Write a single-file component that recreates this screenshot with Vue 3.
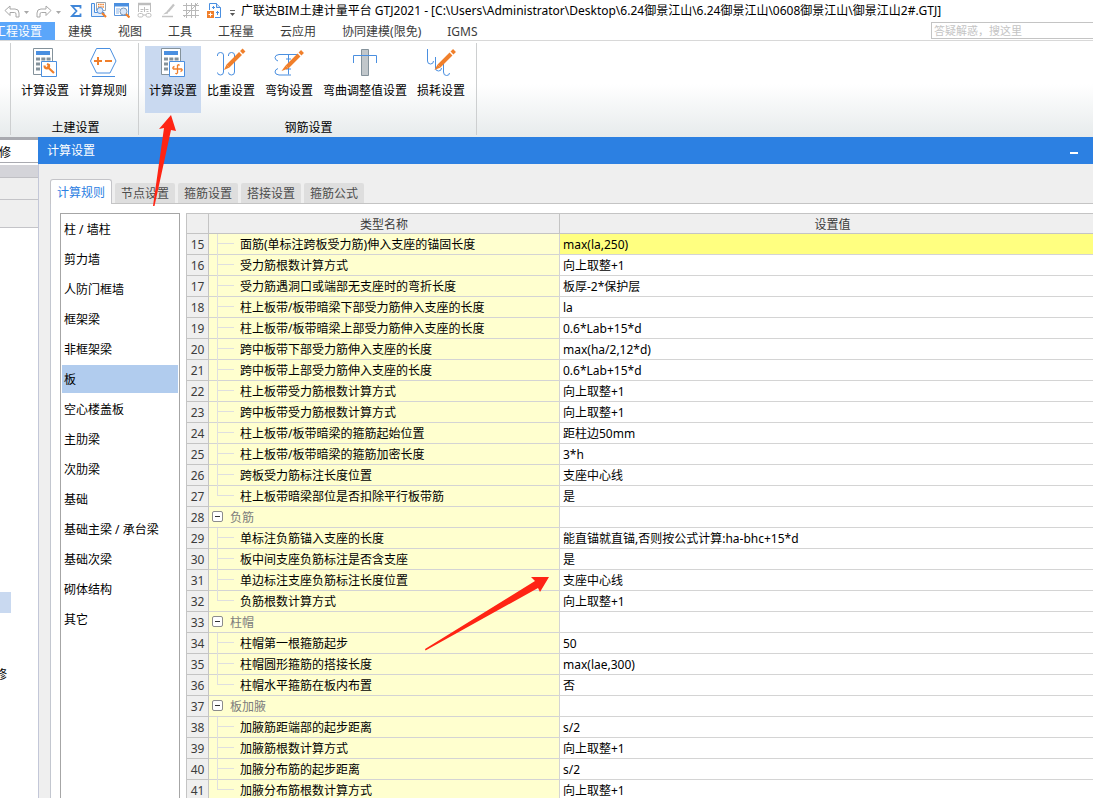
<script setup>
import { ref } from 'vue'

const menus = ['建模', '视图', '工具', '工程量', '云应用', '协同建模(限免)', 'IGMS']
const civilTools = [
  { icon: 'calcWrench', label: '计算设置' },
  { icon: 'rule', label: '计算规则' },
]
const rebarTools = [
  { icon: 'calcRebar', label: '计算设置', active: true },
  { icon: 'weight', label: '比重设置' },
  { icon: 'hook', label: '弯钩设置' },
  { icon: 'bend', label: '弯曲调整值设置' },
  { icon: 'loss', label: '损耗设置' },
]
const groups = [
  { name: '土建设置', tools: civilTools },
  { name: '钢筋设置', tools: rebarTools },
]
const tabs = ['计算规则', '节点设置', '箍筋设置', '搭接设置', '箍筋公式']
const components = [
  '柱 / 墙柱', '剪力墙', '人防门框墙', '框架梁', '非框架梁', '板', '空心楼盖板',
  '主肋梁', '次肋梁', '基础', '基础主梁 / 承台梁', '基础次梁', '砌体结构', '其它',
]
const activeTab = ref('计算规则')
const activeComponent = ref('板')

const rows = [
  { no: 15, name: '面筋(单标注跨板受力筋)伸入支座的锚固长度', value: 'max(la,250)', current: true },
  { no: 16, name: '受力筋根数计算方式', value: '向上取整+1' },
  { no: 17, name: '受力筋遇洞口或端部无支座时的弯折长度', value: '板厚-2*保护层' },
  { no: 18, name: '柱上板带/板带暗梁下部受力筋伸入支座的长度', value: 'la' },
  { no: 19, name: '柱上板带/板带暗梁上部受力筋伸入支座的长度', value: '0.6*Lab+15*d' },
  { no: 20, name: '跨中板带下部受力筋伸入支座的长度', value: 'max(ha/2,12*d)' },
  { no: 21, name: '跨中板带上部受力筋伸入支座的长度', value: '0.6*Lab+15*d' },
  { no: 22, name: '柱上板带受力筋根数计算方式', value: '向上取整+1' },
  { no: 23, name: '跨中板带受力筋根数计算方式', value: '向上取整+1' },
  { no: 24, name: '柱上板带/板带暗梁的箍筋起始位置', value: '距柱边50mm' },
  { no: 25, name: '柱上板带/板带暗梁的箍筋加密长度', value: '3*h' },
  { no: 26, name: '跨板受力筋标注长度位置', value: '支座中心线' },
  { no: 27, name: '柱上板带暗梁部位是否扣除平行板带筋', value: '是', last: true },
  { no: 28, name: '负筋', value: '', group: true },
  { no: 29, name: '单标注负筋锚入支座的长度', value: '能直锚就直锚,否则按公式计算:ha-bhc+15*d' },
  { no: 30, name: '板中间支座负筋标注是否含支座', value: '是' },
  { no: 31, name: '单边标注支座负筋标注长度位置', value: '支座中心线' },
  { no: 32, name: '负筋根数计算方式', value: '向上取整+1', last: true },
  { no: 33, name: '柱帽', value: '', group: true },
  { no: 34, name: '柱帽第一根箍筋起步', value: '50' },
  { no: 35, name: '柱帽圆形箍筋的搭接长度', value: 'max(lae,300)' },
  { no: 36, name: '柱帽水平箍筋在板内布置', value: '否', last: true },
  { no: 37, name: '板加腋', value: '', group: true },
  { no: 38, name: '加腋筋距端部的起步距离', value: 's/2' },
  { no: 39, name: '加腋筋根数计算方式', value: '向上取整+1' },
  { no: 40, name: '加腋分布筋的起步距离', value: 's/2' },
  { no: 41, name: '加腋分布筋根数计算方式', value: '向上取整+1', last: true },
]
</script>

<template>
  <div class="app">
    <header class="titlebar">
      <div class="quick">
        <span class="split">
          <button aria-label="撤销"><svg width="16" height="16" viewBox="0 0 16 16"><path d="M1 8.500 6 4v3h5q4 0 4 4v4h-3v-3q0-1.500-1.500-1.500H6v3z" fill="#fff" stroke="#a8a8a8" /></svg></button>
          <button aria-label="撤销列表"><svg width="5" height="16" viewBox="0 0 5 16"><path d="M0 9h5L2.500 12z" fill="#a8a8a8" /></svg></button>
        </span>
        <span class="split">
          <button aria-label="恢复"><svg width="16" height="16" viewBox="0 0 16 16"><path d="M15 8.500 10 4v3H5q-4 0-4 4v4h3v-3q0-1.500 1.500-1.500H10v3z" fill="#fff" stroke="#a8a8a8" /></svg></button>
          <button aria-label="恢复列表"><svg width="5" height="16" viewBox="0 0 5 16"><path d="M0 9h5L2.500 12z" fill="#a8a8a8" /></svg></button>
        </span>
        <button aria-label="汇总计算"><svg width="16" height="16" viewBox="0 0 16 16"><path d="M12.500 6.500V4H4l4.500 5L4 14h8.500v-2.500" fill="none" stroke="#3f86d8" stroke-width="1.800" /></svg></button>
        <button aria-label="查看工程量">
          <svg width="16" height="16" viewBox="0 0 16 16"><path d="M.5 1.500h3v9H13v4H.5z" fill="#e4eefb" stroke="#4a8fe0" /><path d="M5.500.5h9v8h-9z" fill="#fff" stroke="#9aa4ad" /><path d="M7 2.500h6M7 5h6" stroke="#f07f2b" stroke-width="1.500" stroke-dasharray="1.500 .7" /><circle cx="9" cy="8.500" r="3" fill="#dbe8fa" stroke="#5a95dc" /><path d="m11 11 4 4" stroke="#f07f2b" stroke-width="2.200" /></svg>
        </button>
        <button aria-label="查看计算式">
          <svg width="16" height="16" viewBox="0 0 16 16"><path d="M.5 1.500h14v12H.5z" fill="#fff" stroke="#5a95dc" /><path d="M0 1h15v3.500H0z" fill="#4a8fe0" /><path d="M2 7h4M2 9h3M2 11h3" stroke="#8ab2e6" /><circle cx="9.500" cy="9.500" r="3.500" fill="#dbe8fa" stroke="#7d99b8" /><path d="m12 12 3.500 3.500" stroke="#f07f2b" stroke-width="2.200" /></svg>
        </button>
        <button aria-label="查看报表">
          <svg width="16" height="16" viewBox="0 0 16 16" fill="none" stroke="#bdbdbd"><path d="M1.500 10V2.500h12V10" /><path d="M1 2h13" stroke-width="2.500" /><path d="M3.500 7.500h3M8.500 7.500h3M7.500 5v5M3.500 9.500h2M9.500 9.500h2" /><rect x="1" y="11.500" width="5" height="3.500" rx="1.500" /><rect x="9" y="11.500" width="5" height="3.500" rx="1.500" /><path d="M6 13h3" /></svg>
        </button>
        <button aria-label="编辑"><svg width="16" height="16" viewBox="0 0 16 16"><path d="M2 14.500h11" stroke="#c4c4c4" stroke-width="1.500" /><path d="M14 2.500 8 9.500" stroke="#c4c4c4" stroke-width="2.200" /><path d="M8.500 8 3 12.500l5-1z" fill="#c4c4c4" /></svg></button>
        <button aria-label="网格"><svg width="16" height="16" viewBox="0 0 16 16"><path d="M3.500 1v15M8.500 1v15M12.500 1v15M0 3.500h16M0 8.500h16M0 13.500h16M1 15 15 1" stroke="#b9b9b9" fill="none" /></svg></button>
        <button aria-label="新建">
          <svg width="16" height="16" viewBox="0 0 16 16"><path d="M3.500 8V1.500h7l4 4v10H9" fill="#fff" stroke="#4a8fe0" /><path d="M10.500 1.500v4h4" fill="#cfe0f7" stroke="#4a8fe0" /><path d="M6 5.500h3M7.500 4v3M10 10.500h3M11.500 9v4" stroke="#4a8fe0" /><path d="M1 9h7v7H1z" fill="#f07f2b" /><path d="M4.500 10.500v4M2.500 12.500h4" stroke="#fff" /></svg>
        </button>
        <button aria-label="自定义快速访问"><svg width="7" height="16" viewBox="0 0 7 16"><path d="M1 8.500h5" stroke="#666" /><path d="M1 11h5l-2.500 3z" fill="#555" /></svg></button>
      </div>
      <span class="caption">广联达BIM土建计量平台 GTJ2021 - [C:\Users\Administrator\Desktop\6.24御景江山\6.24御景江山\0608御景江山\御景江山2#.GTJ]</span>
    </header>

    <nav class="menubar">
      <button class="menu on">工程设置</button>
      <button v-for="m in menus" :key="m" class="menu">{{ m }}</button>
      <input class="search" type="text" aria-label="答疑解惑，搜这里" placeholder="答疑解惑，搜这里" />
    </nav>

    <section class="ribbon">
      <div v-for="g in groups" :key="g.name" class="group">
        <div class="tools">
          <button v-for="t in g.tools" :key="t.icon" class="tool" :class="{ active: t.active }">
            <svg width="32" height="32" viewBox="0 0 32 32" fill="none">
              <template v-if="t.icon === 'calcWrench' || t.icon === 'calcRebar'">
                <path d="M4.500 1.500h19v26h-19z" fill="#fff" stroke="#84929b" />
                <path d="M7 4h14v4H7z" fill="#4a8fe0" />
                <path d="M7 12h15M7 17h15M7 22h15" stroke="#84929b" stroke-width="3" stroke-dasharray="4 1.300" />
                <path d="M12.500 14.500h15v15h-15z" fill="#fff" stroke="#4a8fe0" />
                <path v-if="t.icon === 'calcWrench'" d="m18 19.500 7 6.500M15.500 18.500q0 3 2.500 3 2.500-.5 2-3.500l-2-1" stroke="#f07f2b" stroke-width="2.200" />
                <path v-else d="M20.500 18v8M16 22h9M22.500 18.500q-1-1.500-2 0M18.500 26q1 1.500 2 0M17.500 19.500q-2 .5-1.500 2.500M23.500 24.500q2-.5 1.500-2.500" stroke="#f07f2b" stroke-width="1.300" />
              </template>
              <template v-else-if="t.icon === 'rule'">
                <path d="M9.500 1.500h13.500l6 12.500-6 12H9.500l-6-12z" fill="#fff" stroke="#4a8fe0" />
                <path d="M5 29.500h23" stroke="#4a8fe0" />
                <path d="M7 14h8M11 10v8M18 14h7" stroke="#f07f2b" stroke-width="2" />
              </template>
              <template v-else-if="t.icon === 'weight'">
                <path d="M2.500 9V8q0-2.500 3-2.500t3 2.500v17q0 3-3 3t-3-2.500M13.500 9V8q0-2.500 3-2.500t3 2.500v17q0 3-3 3t-3-2.500" stroke="#4a8fe0" />
                <path d="m13 19 12.500-12.500" stroke="#f07f2b" stroke-width="4" /><path d="m26.500 5.500 2.500-2.500" stroke="#f07f2b" stroke-width="4" /><path d="m11.500 17.500 3 3L9 23z" fill="#f07f2b" />
              </template>
              <template v-else-if="t.icon === 'hook'">
                <path d="M5 14q-3-1-3-3.500T6 7.500h18M5 21.500q-3 1-3 3.500t4 3h12M15.500 7.500v20M13 12h5M13 22h5" stroke="#4a8fe0" />
                <path d="m14 20 12-12" stroke="#f07f2b" stroke-width="4" /><path d="m27 7 2.500-2.500" stroke="#f07f2b" stroke-width="4" /><path d="m12.500 18.500 3 3L8.500 24z" fill="#f07f2b" />
              </template>
              <template v-else-if="t.icon === 'bend'">
                <path d="M12.500 2.500h7v26h-7z" fill="#c1c7cb" stroke="#84929b" />
                <path d="M4.500 16V8.500h23V16" stroke="#4a8fe0" />
              </template>
              <template v-else>
                <path d="M2.500 2v12q0 3 3 3t3-3M10.500 10v11q0 3 3 3t3-3M18.500 17v8q0 3.500 3 3.500t3-2.500" stroke="#4a8fe0" />
                <path d="m14 19 12-12" stroke="#f07f2b" stroke-width="4" /><path d="m27 6 2.500-2.500" stroke="#f07f2b" stroke-width="4" /><path d="m12.500 17.500 3 3L9.500 23z" fill="#f07f2b" />
              </template>
            </svg>
            <span>{{ t.label }}</span>
          </button>
        </div>
        <div class="group-name">{{ g.name }}</div>
      </div>
    </section>

    <div class="workspace">
      <aside class="dock">
        <div class="dock-title"><span>装修</span></div>
        <div class="dock-strip"></div>
        <div class="dock-row"></div>
        <div class="dock-row tall"></div>
        <div class="dock-tree">
          <div class="dock-selected"></div>
          <div class="dock-item"><span>装修</span></div>
        </div>
      </aside>

      <main class="dialog">
        <header class="dialog-head">
          <h1>计算设置</h1>
          <button class="minimize" aria-label="最小化"></button>
        </header>
        <div class="dialog-body">
          <div class="tabs" role="tablist">
            <button v-for="t in tabs" :key="t" role="tab" class="tab" :class="{ on: t === activeTab }" :aria-selected="t === activeTab" @click="activeTab = t">{{ t }}</button>
          </div>
          <div class="pane">
            <ul class="list">
              <li v-for="c in components" :key="c">
                <button :class="{ on: c === activeComponent }" @click="activeComponent = c">{{ c }}</button>
              </li>
            </ul>
            <table class="grid">
              <colgroup><col class="c-no" /><col class="c-name" /><col /></colgroup>
              <thead>
                <tr><th></th><th>类型名称</th><th class="wide">设置值</th></tr>
              </thead>
              <tbody>
                <tr v-for="r in rows" :key="r.no" :class="{ current: r.current, parent: r.group }">
                  <td class="no">{{ r.no }}</td>
                  <td class="name">
                    <div class="cell">
                      <button v-if="r.group" class="fold" aria-label="折叠"></button>
                      <i v-else class="branch" :class="{ last: r.last }"></i>
                      <span>{{ r.name }}</span>
                    </div>
                  </td>
                  <td class="value">{{ r.value }}</td>
                </tr>
              </tbody>
            </table>
          </div>
        </div>
      </main>
    </div>

    <svg class="marks" width="560" height="660" viewBox="0 0 560 660" aria-hidden="true">
      <path d="M171 115 159 129l5-1-11 78h1.500L171 130l5 1z" fill="#ff2414" />
      <path d="m549 577-18 0 4 4L425 649l.5 1.500L538 588l2 4z" fill="#ff2414" />
    </svg>
  </div>
</template>

<style>
html, body { margin: 0; }
</style>

<style scoped>
.app {
  position: relative;
  display: flex;
  flex-direction: column;
  height: 100vh;
  overflow: hidden;
  background: #fff;
  color: #000;
  font: 12px/20px "Noto Sans", "Noto Sans CJK SC", sans-serif;
}
button {
  margin: 0;
  padding: 0;
  border: 0;
  background: none;
  color: inherit;
  font: inherit;
}
svg { display: block; }

.titlebar { display: flex; flex: none; align-items: center; height: 22px; padding-left: 4px; }
.quick { display: flex; flex: none; gap: 7px; padding-bottom: 3px; }
.split { display: flex; gap: 4px; }
.caption { padding-left: 5px; white-space: nowrap; }

.menubar { display: flex; flex: none; height: 18px; border-bottom: 1px solid #d8d8d8; color: #3c3c3c; }
.menu { flex: none; height: 18px; padding: 0 13px; line-height: 20px; white-space: nowrap; }
.menu.on { margin-left: -19px; background: #5ba6fa; color: #fff; }
.search {
  box-sizing: border-box;
  width: 162px;
  height: 17px;
  margin-left: auto;
  padding: 0 2px;
  border: 1px solid #c4c4c4;
  border-right: 0;
  background: #fff;
  font: 11px/15px "Noto Sans", "Noto Sans CJK SC", sans-serif;
}
.search::placeholder { color: #c4c4c4; }

.ribbon {
  display: flex;
  flex: none;
  height: 94px;
  padding: 2px 0 0 10px;
  background: linear-gradient(#fff 45%, #e7ebec);
}
.group {
  display: flex;
  flex-direction: column;
  height: 89px;
  padding: 3px 7px 0 6px;
  border-left: 1px solid #cdcfd0;
}
.group:last-child { border-right: 1px solid #cdcfd0; }
.tools { display: flex; gap: 2px; }
.tool { display: flex; flex-direction: column; align-items: center; box-sizing: border-box; height: 67px; padding: 1px 4px 0; white-space: nowrap; }
.tool span { line-height: 24px; }
.tool.active { background: #c9d9f0; }
.group-name { padding: 5px 0 0 3px; line-height: 20px; text-align: center; }

.workspace { display: flex; flex: 1; min-height: 0; }
.dock { display: flex; flex: none; flex-direction: column; width: 38px; overflow: hidden; }
.dock-title {
  display: flex;
  justify-content: flex-start;
  height: 22px;
  border-top: 3px solid #a9aab0;
  border-bottom: 1px solid #a9aab0;
  line-height: 26px;
}
.dock-title span { margin-left: -13px; }
.dock-strip { height: 12px; margin-top: 2px; border-bottom: 1px solid #c0c0c4; background: #d4d4d9; }
.dock-row { height: 21px; border-bottom: 1px solid #c4c4c8; background: #efefef; }
.dock-row.tall { height: 27px; }
.dock-tree { padding-top: 364px; }
.dock-selected { width: 11px; height: 21px; background: #c9d9f0; }
.dock-item { padding-top: 52px; }
.dock-item span { margin-left: -17px; }

.dialog { display: flex; flex: 1; flex-direction: column; min-width: 0; background: #efefef; }
.dialog-head { display: flex; flex: none; align-items: center; justify-content: space-between; height: 27px; padding: 0 15px 0 9px; background: #2c80e2; color: #fff; }
.dialog-head h1 { margin: 0; font-size: 12px; font-weight: 400; }
.minimize { width: 8px; height: 2px; margin-top: 5px; background: #fff; }
.dialog-body { display: flex; flex: 1; flex-direction: column; min-height: 0; padding: 15px 0 0 11px; border-left: 1px solid #c3c7d8; }
.tabs { display: flex; flex: none; align-items: flex-end; gap: 3px; height: 24px; border-bottom: 1px solid #c4c4c4; }
.tab { box-sizing: border-box; height: 20px; padding: 0 6px; border-radius: 2px 2px 0 0; background: #dedede; color: #4c4c4c; line-height: 22px; }
.tab.on {
  height: 25px;
  margin-bottom: -1px;
  border: 1px solid #c4c4c8;
  border-bottom: 0;
  border-radius: 3px 3px 0 0;
  background: #fff;
  color: #2c80e2;
  line-height: 26px;
}
.pane { display: flex; flex: 1; gap: 6px; min-height: 0; padding: 9px 0 0 9px; border-left: 1px solid #c3c7d0; background: #fff; overflow: hidden; }

.list { box-sizing: border-box; flex: none; width: 120px; height: 100vh; margin: 0; padding: 1px; border: 1px solid #a6a6a6; list-style: none; }
.list li { height: 30px; }
.list button { display: block; width: 100%; height: 28px; padding: 0 2px; line-height: 30px; text-align: left; white-space: nowrap; }
.list button.on { background: #b1ccee; }

.grid { flex: 1; align-self: flex-start; border-spacing: 0; table-layout: fixed; border-top: 1px solid #c4c4c4; border-left: 1px solid #c4c4c4; }
.c-no { width: 22px; }
.c-name { width: 351px; }
.grid th { height: 17px; padding: 2px 0 0; border-right: 1px solid #c4c4c4; border-bottom: 1px solid #c4c4c4; background: #efefef; color: #3c3c3c; font-weight: 400; line-height: 17px; }
.grid th.wide { padding-left: 12px; border-right: 0; }
.grid td { height: 18px; padding: 2px 0 0; border-bottom: 1px solid #d4d4d4; line-height: 18px; white-space: nowrap; }
.grid td.no { border-right: 1px solid #c4c4c4; border-bottom-color: #c4c4c4; background: #efefef; color: #3c3c3c; text-align: center; }
.grid td.name { height: 20px; padding: 0; border-right: 1px solid #d4d4d4; background: #ffffcf; }
.grid td.value { padding-left: 3px; }
.current td.value { background: #ffff80; }
.parent td.name { color: #7c7c7c; }
.cell { display: flex; height: 20px; }
.branch { position: relative; width: 16px; height: 21px; margin: 0 6px 0 8px; border-left: 1px solid #dfdfdf; }
.branch::after { content: ""; position: absolute; top: 9px; left: 0; width: 16px; border-top: 1px solid #dfdfdf; }
.branch.last { height: 10px; }
.cell span { line-height: 22px; }
.fold { position: relative; width: 11px; height: 11px; margin: 4px 7px 0 3px; border: 1px solid #8c8c8c; border-radius: 2px; background: #fff; box-sizing: border-box; }
.fold::after { content: ""; position: absolute; top: 4px; left: 2px; width: 5px; height: 1px; background: #333; }

.marks { position: absolute; top: 0; left: 0; pointer-events: none; }
</style>
